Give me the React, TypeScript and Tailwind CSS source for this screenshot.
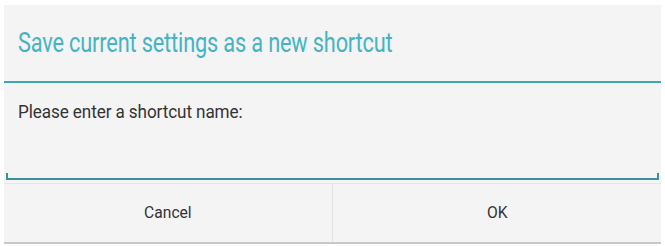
export default function App() {
  return (
    <div className="h-[246px] w-[665px] bg-white pt-[5px] font-['Roboto',sans-serif]">
      <div className="mx-[4px] flex flex-col bg-[#f4f4f4]">
        <div className="flex h-[78px] items-center border-b-2 border-[#3aa9b3] pl-[14px]">
          <h2 className="origin-left scale-x-[0.805] text-[27px] tracking-[-0.2px] text-[#45b3c2]">
            Save current settings as a new shortcut
          </h2>
        </div>
        <div className="flex h-[97px] flex-col px-[14px] pt-[15px]">
          <p className="origin-left scale-x-[0.9] text-[19px] tracking-[-0.1px] text-[#333]">
            Please enter a shortcut name:
          </p>
          <div className="mt-auto -mx-[12px] h-[7px] border-x-2 border-b-2 border-[#3a8f9a]" />
        </div>
        <div className="mt-[3px] grid h-[59px] grid-cols-2 border-t border-[#e6e6e6] text-[17px] text-[#333]">
          <button type="button" className="border-r border-[#e2e2e2]">
            <span className="inline-block scale-x-[0.92]">Cancel</span>
          </button>
          <button type="button">
            <span className="inline-block scale-x-[0.92]">OK</span>
          </button>
        </div>
        <div className="h-[2px] bg-[#c8c8c8]" />
      </div>
    </div>
  )
}
